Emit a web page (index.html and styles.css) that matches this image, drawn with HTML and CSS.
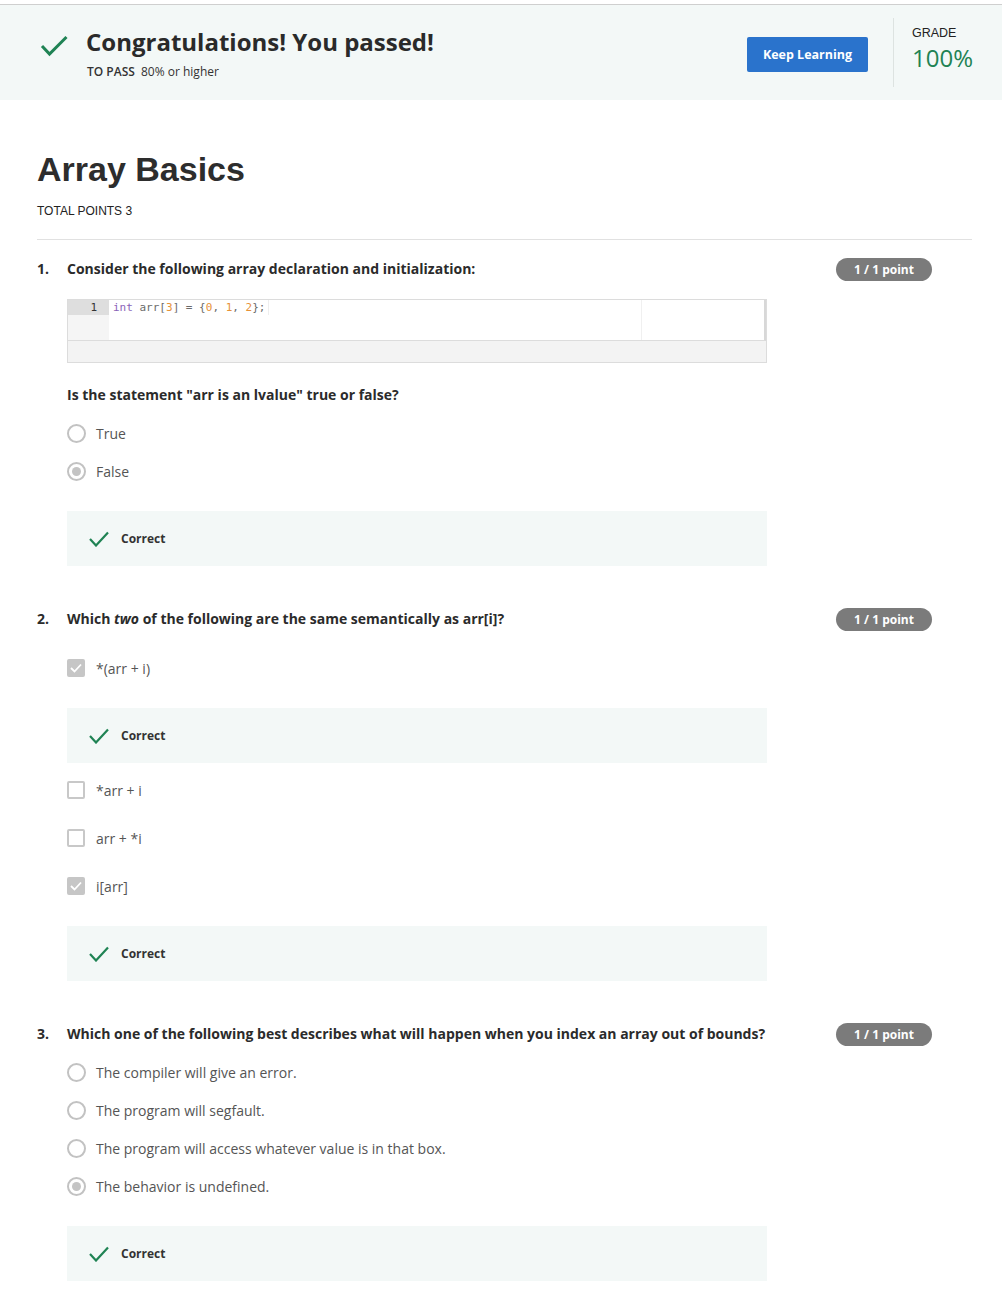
FILE: index.html
```html
<!DOCTYPE html>
<html>
<head>
<meta charset="utf-8">
<link rel="stylesheet" href="styles.css">
</head>
<body>
<header class="banner">
  <div class="banner-left">
    <svg class="banner-check" width="28" height="22" viewBox="0 0 28 22"><polyline points="2,11 9.5,19 26.5,2" fill="none" stroke="#1f8354" stroke-width="3"/></svg>
    <div>
      <h2 class="banner-title">Congratulations! You passed!</h2>
      <div class="banner-pass"><b>TO PASS</b> 80% or higher</div>
    </div>
  </div>
  <div class="banner-right">
    <button class="btn">Keep Learning</button>
    <div class="divider"></div>
    <div class="grade">
      <div class="grade-label">GRADE</div>
      <div class="grade-pct">100%</div>
    </div>
  </div>
</header>

<main class="content">
  <h1 class="title">Array Basics</h1>
  <div class="total">TOTAL POINTS 3</div>
  <hr class="rule">

  <section class="question">
    <div class="qnum">1.</div>
    <div class="qbody">
      <div class="qtext">Consider the following array declaration and initialization:</div>
      <div class="code">
        <div class="code-editor">
          <div class="gutter"><div class="gutter-line">1</div></div>
          <div class="code-lines">
            <div class="code-line"><span class="kw">int</span> arr[<span class="num">3</span>] = {<span class="num">0</span>, <span class="num">1</span>, <span class="num">2</span>};</div>
            <div class="print-margin"></div>
          </div>
        </div>
        <div class="code-footer"></div>
      </div>
      <div class="qsub">Is the statement "arr is an lvalue" true or false?</div>
      <div class="options radios first-r">
        <div class="opt"><span class="radio"></span>True</div>
        <div class="opt"><span class="radio on"></span>False</div>
      </div>
      <div class="correct after-r"><svg width="20" height="16" viewBox="0 0 20 16"><polyline points="1,8 7,14.5 19,1.5" fill="none" stroke="#1f8354" stroke-width="2.2"/></svg>Correct</div>
    </div>
    <div class="badge">1 / 1 point</div>
  </section>

  <section class="question">
    <div class="qnum">2.</div>
    <div class="qbody">
      <div class="qtext">Which <i>two</i> of the following are the same semantically as arr[i]?</div>
      <div class="options checks first-c">
        <div class="opt"><span class="box on"><svg width="14" height="12" viewBox="0 0 14 12"><polyline points="2,6 5.5,9.5 12,2.5" fill="none" stroke="#fff" stroke-width="1.8"/></svg></span>*(arr + i)</div>
      </div>
      <div class="correct mid-c"><svg width="20" height="16" viewBox="0 0 20 16"><polyline points="1,8 7,14.5 19,1.5" fill="none" stroke="#1f8354" stroke-width="2.2"/></svg>Correct</div>
      <div class="options checks after-box">
        <div class="opt"><span class="box"></span>*arr + i</div>
        <div class="opt"><span class="box"></span>arr + *i</div>
        <div class="opt"><span class="box on"><svg width="14" height="12" viewBox="0 0 14 12"><polyline points="2,6 5.5,9.5 12,2.5" fill="none" stroke="#fff" stroke-width="1.8"/></svg></span>i[arr]</div>
      </div>
      <div class="correct mid-c"><svg width="20" height="16" viewBox="0 0 20 16"><polyline points="1,8 7,14.5 19,1.5" fill="none" stroke="#1f8354" stroke-width="2.2"/></svg>Correct</div>
    </div>
    <div class="badge">1 / 1 point</div>
  </section>

  <section class="question">
    <div class="qnum">3.</div>
    <div class="qbody">
      <div class="qtext">Which one of the following best describes what will happen when you index an array out of bounds?</div>
      <div class="options radios first-r">
        <div class="opt"><span class="radio"></span>The compiler will give an error.</div>
        <div class="opt"><span class="radio"></span>The program will segfault.</div>
        <div class="opt"><span class="radio"></span>The program will access whatever value is in that box.</div>
        <div class="opt"><span class="radio on"></span>The behavior is undefined.</div>
      </div>
      <div class="correct after-r"><svg width="20" height="16" viewBox="0 0 20 16"><polyline points="1,8 7,14.5 19,1.5" fill="none" stroke="#1f8354" stroke-width="2.2"/></svg>Correct</div>
    </div>
    <div class="badge">1 / 1 point</div>
  </section>
</main>
</body>
</html>
```

FILE: styles.css
```css
* { box-sizing: border-box; }
html, body { margin: 0; padding: 0; background: #fff; }
body {
  font-family: "Open Sans", "Liberation Sans", sans-serif;
  color: #1f1f1f;
}

.banner {
  margin-top: 4px;
  border-top: 1px solid #cfcfcf;
  height: 96px;
  background: #f3f8f7;
  display: flex;
  align-items: center;
  justify-content: space-between;
  padding: 0 29px 0 40px;
}
.banner-left { display: flex; align-items: flex-start; align-self: flex-start; margin-top: 22px; }
.banner-check { margin-top: 8px; margin-right: 18px; flex: none; }
.banner-title {
  margin: 0;
  font-size: 24px;
  line-height: 30px;
  font-weight: 700;
  color: #2a2a2a;
}
.banner-pass {
  margin-top: 7px;
  font-size: 12px;
  line-height: 16px;
  color: #333;
  padding-left: 1px;
}
.banner-pass b { font-weight: 600; margin-right: 3px; }
.banner-right { display: flex; align-items: center; }
.btn {
  width: 121px;
  height: 35px;
  margin-top: 4px;
  border: 0;
  border-radius: 2px;
  background: #2a73cc;
  color: #fff;
  font-family: "Open Sans", sans-serif;
  font-weight: 700;
  font-size: 12.5px;
  padding: 0;
}
.divider { width: 1px; height: 69px; background: #dde3e1; margin: 0 18px 0 25px; }
.grade { width: 61px; margin-top: -7px; }
.grade-label { font-family: "Liberation Sans", Arial, sans-serif; font-size: 12.5px; line-height: 14px; color: #222; }
.grade-pct { font-family: "Open Sans", sans-serif; font-weight: 400; font-size: 24px; line-height: 28px; color: #1f8354; margin-top: 4px; }

.content { padding: 0 30px 0 37px; }
.title {
  margin: 49px 0 0;
  font-family: "Liberation Sans", Arial, sans-serif;
  font-size: 34px;
  line-height: 40px;
  font-weight: 700;
  color: #2d2d2d;
}
.total {
  margin-top: 14px;
  font-family: "Liberation Sans", Arial, sans-serif;
  font-size: 12px;
  line-height: 16px;
  color: #222;
}
.rule { margin: 20px 0 19px; border: 0; border-top: 1px solid #e1e1e1; height: 0; }

.question {
  display: grid;
  grid-template-columns: 30px 700px 1fr;
  margin-bottom: 43px;
}
.qnum, .qtext, .qsub {
  font-size: 14px;
  line-height: 20px;
  font-weight: 700;
  color: #2b2b2b;
}
.qtext i { font-weight: 700; }
.badge {
  justify-self: end;
  align-self: start;
  margin-right: 40px;
  margin-top: -1px;
  width: 96px;
  height: 23px;
  border-radius: 12px;
  background: #7b7b7b;
  color: #fff;
  font-size: 12px;
  font-weight: 700;
  line-height: 23px;
  text-align: center;
}

.code {
  margin-top: 20px;
  border: 1px solid #dcdcdc;
  height: 64px;
  display: flex;
  flex-direction: column;
}
.code-editor {
  display: flex;
  height: 41px;
  border-right: 2px solid #d8d8d8;
  border-bottom: 1px solid #dcdcdc;
  background: #fff;
}
.gutter { width: 41px; background: #f5f5f5; }
.gutter-line {
  height: 15px;
  background: #dedede;
  font-family: "DejaVu Sans Mono", monospace;
  font-size: 11px;
  line-height: 15px;
  text-align: right;
  padding-right: 12px;
  color: #333;
}
.code-lines { position: relative; flex: 1; }
.code-line {
  font-family: "DejaVu Sans Mono", monospace;
  font-size: 11px;
  line-height: 15px;
  color: #6b6b6b;
  padding-left: 4px;
  width: 160px;
  border-right: 1px solid #eee;
}
.kw { color: #8a63b8; }
.num { color: #e69138; }
.print-margin { position: absolute; left: 532px; top: 0; bottom: 0; width: 1px; background: #f0f0f0; }
.code-footer { flex: 1; background: #f3f3f3; }

.qsub { margin-top: 22px; }
.options { display: flex; flex-direction: column; }
.first-r { margin-top: 9px; }
.first-c { margin-top: 15px; }
.after-box { margin-top: 3px; }
.radios .opt { height: 38px; }
.checks .opt { height: 48px; }
.opt {
  display: flex;
  align-items: center;
  font-size: 14px;
  color: #555;
}
.radio {
  width: 19px;
  height: 19px;
  border: 2px solid #c2c2c2;
  border-radius: 50%;
  margin-right: 10px;
  display: flex;
  align-items: center;
  justify-content: center;
  flex: none;
}
.radio.on::after {
  content: "";
  width: 9px;
  height: 9px;
  border-radius: 50%;
  background: #c4c4c4;
}
.box {
  width: 18px;
  height: 18px;
  border: 2px solid #c8c8c8;
  border-radius: 2px;
  margin-right: 11px;
  display: flex;
  align-items: center;
  justify-content: center;
  flex: none;
}
.box.on { background: #c6c6c6; border-color: #c6c6c6; }

.correct {
  height: 55px;
  background: #f3f8f7;
  display: flex;
  align-items: center;
  padding-left: 22px;
  font-size: 12px;
  font-weight: 700;
  color: #333;
}
.correct svg { margin-right: 12px; flex: none; }
.after-r { margin-top: 21px; }
.mid-c { margin-top: 16px; }
```
